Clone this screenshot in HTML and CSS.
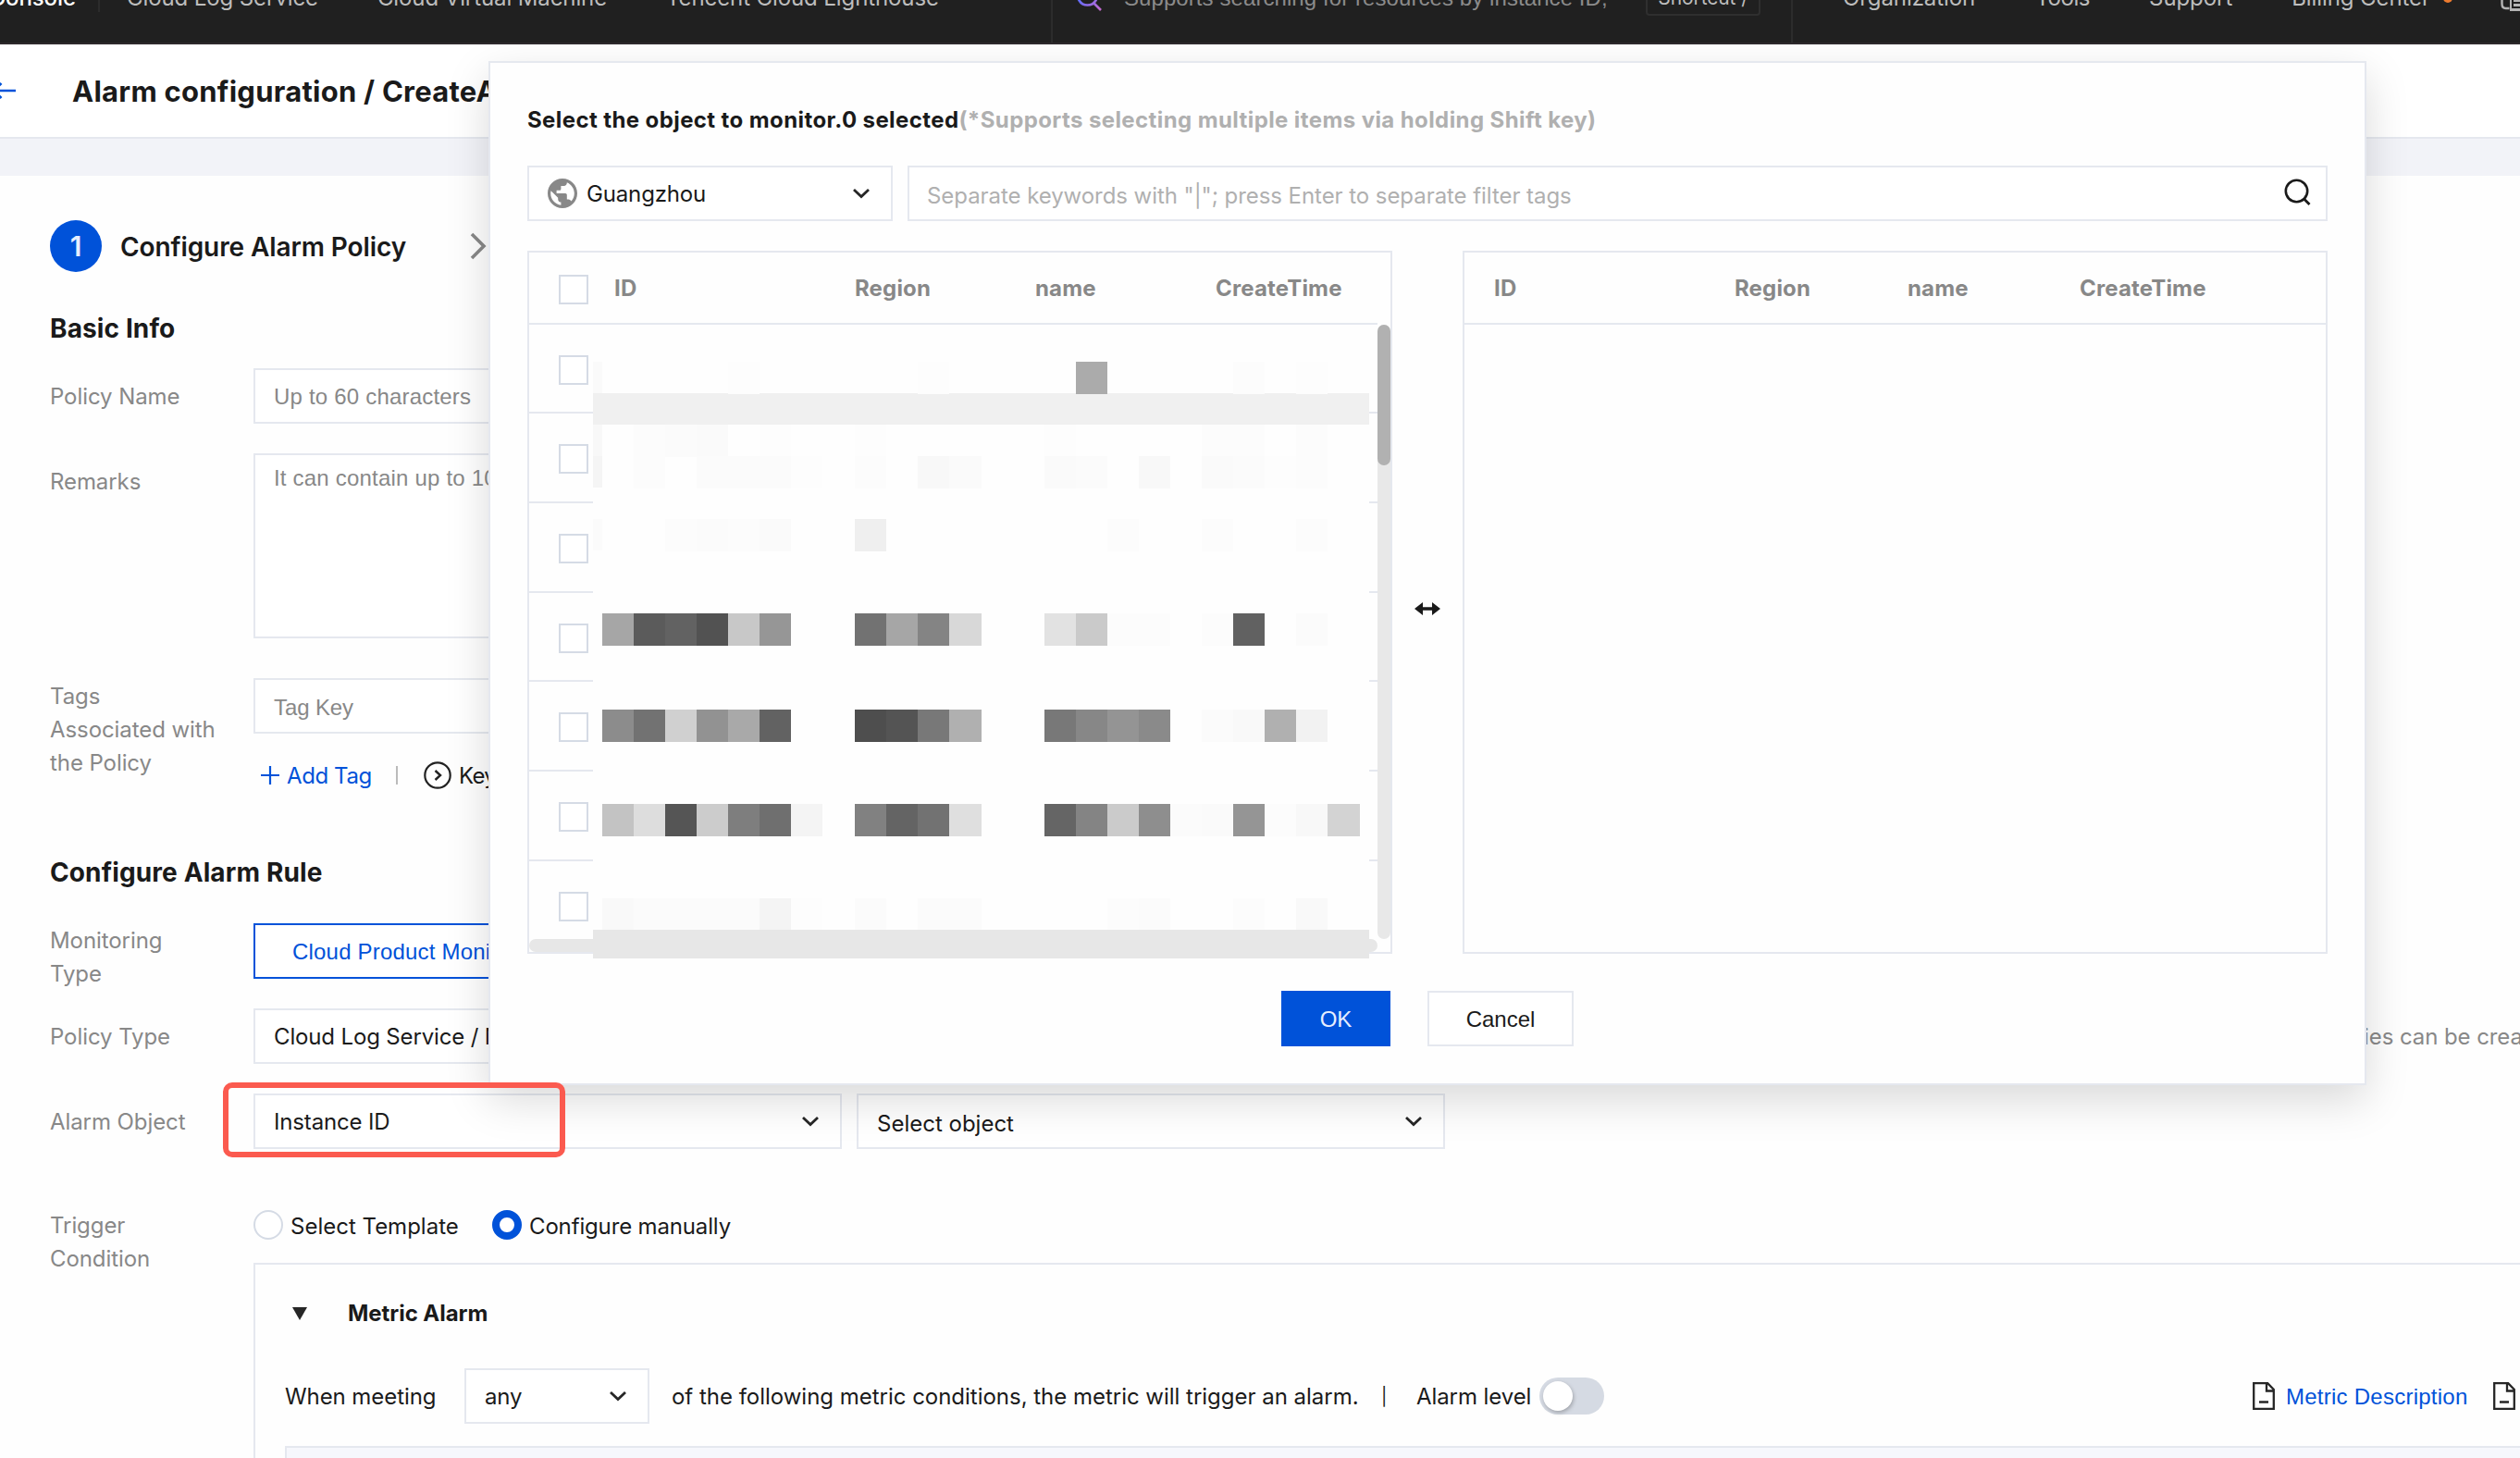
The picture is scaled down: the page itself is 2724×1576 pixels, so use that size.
FILE: index.html
```
<!DOCTYPE html>
<html lang="en">
<head>
<meta charset="utf-8">
<title>Alarm configuration</title>
<link rel="stylesheet" href="styles.css">
</head>
<body>
<header class="topbar">
  <div class="brand">Console</div>
  <nav class="products"><a>Cloud Log Service</a><a>Cloud Virtual Machine</a><a>Tencent Cloud Lighthouse</a></nav>
  <div class="global-search">
    <svg class="gs-icon" width="30" height="30" viewBox="0 0 30 30"><defs><linearGradient id="gs" x1="0" y1="0" x2="1" y2="1"><stop offset="0.2" stop-color="#4f6bff"/><stop offset="1" stop-color="#c86bd0"/></linearGradient></defs><path d="M13.500 2.500a10.500 10.500 0 1 0 .01 0zM21 22l7 7" fill="none" stroke="url(#gs)" stroke-width="2.600"/></svg>
    <span class="gs-text">Supports searching for resources by instance ID,</span>
    <kbd>Shortcut /</kbd>
  </div>
  <nav class="account"><a>Organization</a><a>Tools</a><a>Support</a><a>Billing Center</a><i class="dot"></i>
    <svg class="lang" width="30" height="30" viewBox="0 0 30 30"><path d="M2.500 4v17q0 5 4 5h4" fill="none" stroke="#b4b4b4" stroke-width="2.400"/><rect x="11" y="10" width="20" height="19" fill="#b4b4b4"/><path d="M22 14h-8v11h8M14 20h8" fill="none" stroke="#1f1f1f" stroke-width="2"/></svg>
  </nav>
</header>

<div class="page-title">
  <svg class="back" width="20" height="24" viewBox="0 0 20 24"><path d="M0 12h17M1.500 4l-8 8 8 8" fill="none" stroke="#0052d9" stroke-width="2.600"/></svg>
  <h1>Alarm configuration / CreateAlarm Policy</h1>
</div>
<div class="band"></div>

<main class="form">
  <div class="step">
    <span class="step-no">1</span><span class="step-name">Configure Alarm Policy</span>
    <svg width="20" height="30" viewBox="0 0 20 30"><path d="M3 2l13 13L3 28" fill="none" stroke="#888" stroke-width="3.600"/></svg>
  </div>

  <h2 class="basic">Basic Info</h2>
  <div class="row r-name"><label>Policy Name</label><div class="box long ph">Up to 60 characters</div></div>
  <div class="row r-remarks"><label>Remarks</label><div class="box long area ph">It can contain up to 100 characters</div></div>
  <div class="row r-tags"><label>Tags<br>Associated with<br>the Policy</label>
    <div>
      <div class="box long ph tagkey">Tag Key</div>
      <div class="tag-actions">
        <svg width="20" height="20" viewBox="0 0 20 20"><path d="M10 0v20M0 10h20" stroke="#0052d9" stroke-width="2.200"/></svg>
        <a class="link add">Add Tag</a><i class="sep"></i>
        <svg width="30" height="30" viewBox="0 0 30 30"><circle cx="15" cy="15" r="13.700" fill="none" stroke="#222" stroke-width="2.200"/><path d="M12.500 10l5.500 5-5.500 5" fill="none" stroke="#222" stroke-width="2.400"/></svg>
        <span class="clip">Keyword</span>
      </div>
    </div>
  </div>

  <h2 class="rule">Configure Alarm Rule</h2>
  <div class="row r-mon"><label>Monitoring<br>Type</label><div class="box long mon">Cloud Product Monitoring</div></div>
  <div class="row r-type"><label>Policy Type</label><div class="box long">Cloud Log Service / Metric</div><span class="hint">policies can be created</span></div>
  <div class="row r-object"><label>Alarm Object</label>
    <div class="box sel">Instance ID<svg class="chev" width="20" height="12" viewBox="0 0 20 12"><path d="M2 2l8 7.500L18 2" /></svg></div>
    <div class="box sel sel2"><span>Select object</span><svg class="chev" width="20" height="12" viewBox="0 0 20 12"><path d="M2 2l8 7.500L18 2" /></svg></div>
    <div class="highlight"></div>
  </div>
  <div class="row r-trigger"><label>Trigger<br>Condition</label>
    <div class="trigger">
      <div class="radios"><i class="radio"></i><span class="t1">Select Template</span><i class="radio on"></i><span class="t2">Configure manually</span></div>
      <section class="panel">
        <div class="panel-head"><svg width="16" height="14" viewBox="0 0 16 14"><path d="M0 0h16L8 14z" fill="#262626"/></svg><b>Metric Alarm</b></div>
        <div class="cond">
          <span class="when">When meeting</span>
          <div class="box any">any<svg class="chev" width="20" height="12" viewBox="0 0 20 12"><path d="M2 2l8 7.500L18 2" /></svg></div>
          <span class="of">of the following metric conditions, the metric will trigger an alarm.</span>
          <span class="bar">|</span><span class="lvl">Alarm level</span><i class="switch"></i>
          <div class="docs">
            <svg width="24" height="30" viewBox="0 0 24 30"><path d="M1.200 1.200h15L22.800 8v20.800H1.200zM15 1.500V9.500h7.500M7 21.500h10" fill="none" stroke="#262626" stroke-width="2.300"/></svg>
            <a class="link">Metric Description</a>
            <svg width="24" height="30" viewBox="0 0 24 30"><path d="M1.200 1.200h15L22.800 8v20.800H1.200zM15 1.500V9.500h7.500M7 21.500h10" fill="none" stroke="#262626" stroke-width="2.300"/></svg>
          </div>
        </div>
        <div class="rules"></div>
      </section>
    </div>
  </div>
</main>

<div class="dialog">
  <div class="dlg-title">Select the object to monitor.0 selected<span>(*Supports selecting multiple items via holding Shift key)</span></div>
  <div class="filters">
    <div class="box region">
      <svg width="32" height="32" viewBox="2 2 20 20"><path fill="#888" d="M12 2C6.480 2 2 6.480 2 12s4.480 10 10 10 10-4.480 10-10S17.520 2 12 2zm-1 17.930c-3.950-.49-7-3.850-7-7.930 0-.62.080-1.210.21-1.790L9 15v1c0 1.100.9 2 2 2v1.930zm6.900-2.540c-.26-.81-1-1.390-1.900-1.390h-1v-3c0-.55-.45-1-1-1H8v-2h2c.55 0 1-.45 1-1V7h2c1.100 0 2-.9 2-2v-.41c2.930 1.190 5 4.060 5 7.410 0 2.080-.8 3.970-2.100 5.390z"/></svg>
      <span>Guangzhou</span><svg class="chev" width="20" height="12" viewBox="0 0 20 12"><path d="M2 2l8 7.500L18 2" /></svg>
    </div>
    <div class="box keywords"><span>Separate keywords with "|"; press Enter to separate filter tags</span>
      <svg width="30" height="30" viewBox="0 0 30 30"><circle cx="13.500" cy="13.500" r="11.700" fill="none" stroke="#1a1a1a" stroke-width="2.600"/><path d="M21.500 22l6 6" stroke="#1a1a1a" stroke-width="2.800"/></svg></div>
  </div>
  <div class="transfer">
    <div class="list source">
      <div class="thead"><i class="check"></i><b>ID</b><b>Region</b><b>name</b><b>CreateTime</b></div>
      <div class="tbody">
        <div class="rows"><div class="trow short"><i class="check"></i></div><div class="trow"><i class="check"></i></div><div class="trow"><i class="check"></i></div><div class="trow short"><i class="check"></i></div><div class="trow"><i class="check"></i></div><div class="trow"><i class="check"></i></div><div class="trow last"><i class="check"></i></div><div class="hbar"></div></div>
        <div class="vbar"><i></i></div>
      </div>
      <svg class="mosaic" id="mosaic" width="840" height="660" viewBox="0 0 840 660"></svg>
    </div>
    <div class="swap"><svg width="28" height="14" viewBox="0 0 28 14"><path d="M0 7l9-7v5.300h10V0l9 7-9 7V8.700H9V14z" fill="#1a1a1a"/></svg></div>
    <div class="list target"><div class="thead"><b>ID</b><b>Region</b><b>name</b><b>CreateTime</b></div></div>
  </div>
  <div class="actions"><button class="ok">OK</button><button class="cancel">Cancel</button></div>
</div>
<script src="mosaic.js"></script>
</body>
</html>
```

FILE: mosaic.js
```
// Pixelated cover over the source list: each row is [top, {column: "shades..."}].
const CELL = 34.08;
const FIRST = 9.8;
const rows = [
  [14, { 4: "fd", 10: "fd", 15: "ab", 20: "fc", 22: "fd" }],
  [82, { 1: "fc fb fa", 5: "fd", 8: "fd", 14: "fd", 19: "fc fc", 22: "fc" }],
  [116, { 1: "fc", 3: "fb fb fb fd", 8: "fc", 10: "f8 fa", 14: "fa fb fe f8", 19: "fa fb fd fc" }],
  [184, { 2: "fc fb fc fa", 8: "ef", 16: "fc", 19: "fc", 22: "fc" }],
  [286, { 0: "a6 5b 62 52 c8 96", 8: "72 a6 84 d8", 14: "e2 ca fc fc", 19: "fc 61", 22: "fb" }],
  [390, { 0: "8c 72 d0 92 a9 62", 8: "4e 54 78 b0", 14: "78 87 94 8a", 19: "fb f9 b0 f2" }],
  [492, { 0: "c3 dd 55 cc 7e 6f f4", 8: "81 64 72 df", 14: "65 84 cb 8e fb fa 95 fc f8 d3" }],
  [594, { 0: "f9 fb fb fb fb f4 fd", 8: "fb fe fb fb", 16: "fc fb", 19: "fe fc", 22: "f9" }]
];
const svg = document.getElementById("mosaic");
const add = (x, y, w, h, shade) => {
  const r = document.createElementNS("http://www.w3.org/2000/svg", "rect");
  r.setAttribute("x", x); r.setAttribute("y", y);
  r.setAttribute("width", w); r.setAttribute("height", h);
  r.setAttribute("fill", "#" + shade + shade + shade);
  r.setAttribute("shape-rendering", "crispEdges");
  svg.appendChild(r);
};
// Columns from the eighth on sit one pixel further right.
const left = (col) => Math.round(FIRST + col * CELL + (col > 7 ? 0.8 : 0));
add(0, 0, 839, 660, "fe");
add(0, 14, 9.6, 34, "fa");
add(0, 82, 9.6, 34, "f8");
add(0, 116, 9.6, 34, "f5");
add(0, 184, 9.6, 34, "fb");
add(0, 48, 839, 34, "f0");
rows.forEach(([y, groups]) => Object.entries(groups).forEach(([col, shades]) =>
  shades.split(" ").forEach((s, i) => {
    const c = Number(col) + i;
    add(left(c), y, left(c + 1) - left(c), 34.5, s);
  })));
add(0, 628, 839, 31, "e7");
```

FILE: styles.css
```
* { box-sizing: border-box; }
html { overflow: hidden; }
body { margin: 0; width: 2724px; height: 1576px; overflow: hidden; position: relative; background: #fefefe; color: #1a1a1a; font: 400 24px/36px Inter, "Liberation Sans", sans-serif; letter-spacing: -0.08px; }
svg { display: block; flex: none; }
i { font-style: normal; display: block; flex: none; }
span, a, b, label { white-space: nowrap; }
b { font-weight: 700; }
h1, h2 { margin: 0; font-weight: 700; white-space: nowrap; }

.topbar { height: 48px; background: #202020; border-bottom: 2px solid #2d292c; display: flex; color: #bdbdbd; overflow: hidden; position: relative; z-index: 2; }
.topbar a, .brand, .gs-text { line-height: 36px; margin-top: -20px; height: 36px; }
.brand { width: 108px; height: 33px; border-right: 2px solid #2c2c2c; padding-right: 24px; display: flex; justify-content: flex-end; color: #fff; font-weight: 500; }
.products { display: flex; gap: 64px; padding-left: 29px; width: 1028px; }
.products a { letter-spacing: -0.1px; }
.global-search { width: 802px; flex: none; border: solid #2c2c2c; border-width: 0 2px; display: flex; padding-left: 24px; }
.brand, .products { flex: none; }
.gs-icon { margin-top: -18px; }
.gs-text { margin-left: 23px; width: 564px; color: #8b8b8b; font-family: "Liberation Sans", Arial, sans-serif; letter-spacing: 0.08px; }
kbd { font: 400 21px/32px Inter, sans-serif; height: 37px; margin-top: -20px; width: 124px; border: 2px solid #2f2f2f; border-radius: 4px; text-align: center; }
.account { display: flex; padding-left: 54px; flex: none; }
.account a { margin-right: 64px; }
.account a:nth-child(1) { margin-right: 65px; }
.account a:nth-child(2) { letter-spacing: -0.4px; }
.account a:nth-child(4) { margin-right: 14px; letter-spacing: -0.08px; }
.dot { width: 10px; height: 10px; border-radius: 5px; background: #ed7b2f; margin-top: -7px; }
.lang { margin: -17px -30px 0 51px; }

.page-title { height: 102px; background: #fff; border-bottom: 2px solid #e5e8ef; display: flex; align-items: center; }
.back { width: 20px; margin-right: 58px; }
h1 { font-size: 31px; letter-spacing: 0.25px; padding-top: 1px; }
.band { height: 40px; background: #f2f3f8; }

.form { padding: 48px 0 0 54px; }
.step { display: flex; align-items: center; height: 56px; }
.step-no { width: 56px; height: 56px; border-radius: 28px; background: #0052d9; color: #e6eeff; font-size: 30px; font-weight: 600; line-height: 57px; text-align: center; margin-right: 20px; }
.step-name { font-size: 28px; font-weight: 600; width: 377px; letter-spacing: -0.1px; padding-top: 2px; }
h2 { font-size: 28px; line-height: 40px; letter-spacing: 0.12px; }
.basic { margin-top: 41px; }
.rule { margin-top: 67px; }
.row { display: flex; position: relative; }
label { width: 220px; flex: none; color: #888; padding-top: 13px; }
.box { border: 2px solid #e5e8ef; background: #fff; height: 60px; padding: 2px 20px 0; display: flex; align-items: center; white-space: nowrap; flex: none; overflow: hidden; letter-spacing: -0.15px; }
.long { width: 635px; }
.ph { color: #888; font-family: "Liberation Sans", Arial, sans-serif; letter-spacing: 0.2px; }
.tagkey { letter-spacing: -0.1px; padding-top: 3px; }
.chev { margin-left: auto; }
.chev path { fill: none; stroke: #262626; stroke-width: 2.8px; }
.r-name { margin-top: 23px; }
.r-remarks { margin-top: 32px; }
.area { height: 200px; align-items: flex-start; padding-top: 7px; }
.r-tags { margin-top: 43px; height: 123px; }
.r-tags label { padding-top: 2px; }
.tag-actions { display: flex; align-items: center; height: 36px; margin-top: 27px; padding-left: 8px; }
.link { color: #0052d9; font-family: "Liberation Sans", Arial, sans-serif; letter-spacing: 0.25px; padding-top: 1px; }
.add { font-family: Inter, sans-serif; letter-spacing: -0.4px; width: 118px; margin-left: 8px; }
.sep { width: 2px; height: 20px; background: #bbb; margin-right: 28px; }
.clip { margin-left: 8px; letter-spacing: -0.7px; padding-top: 1px; }
.r-mon { margin-top: 35px; }
.r-mon label { padding-top: 1px; margin-bottom: -1px; }
.mon { border-color: #0052d9; color: #0052d9; padding-left: 40px; font-family: "Liberation Sans", Arial, sans-serif; letter-spacing: 0.2px; }
.r-type { margin-top: 20px; }
.r-object { margin-top: 32px; }
.r-type label, .r-object label { padding-top: 13px; }
.hint { margin-left: 1592px; margin-right: -400px; color: #888; padding-top: 13px; }
.sel { width: 636px; padding-right: 22px; }
.sel .chev { margin-top: -3px; }
.sel2 { margin-left: 16px; letter-spacing: 0; }
.sel2 span { padding-top: 4px; }
.highlight { position: absolute; left: 187px; top: -12px; width: 370px; height: 81px; border: 6px solid #fb5a4f; border-radius: 10px; z-index: 3; }
.r-trigger { margin-top: 65px; }
.r-trigger label { padding-top: 0; }
.radios { display: flex; align-items: center; height: 36px; }
.radios span { padding-top: 1px; }
.radio { width: 32px; height: 32px; border-radius: 16px; border: 2px solid #d5dbe5; background: #fff; margin-right: 8px; margin-top: -2px; }
.radio.on { border: 8px solid #0052d9; }
.t1 { width: 218px; letter-spacing: 0; }
.t2 { letter-spacing: -0.15px; }
.panel { margin-top: 22px; width: 2450px; height: 211px; border: solid #e5e8ef; border-width: 2px 0 0 2px; padding: 35px 0 0 32px; overflow: hidden; }
.panel-head { display: flex; align-items: center; padding-left: 8px; gap: 44px; letter-spacing: -0.05px; }
.panel-head svg { margin-top: -1px; }
.cond { display: flex; align-items: center; height: 60px; margin-top: 41px; }
.cond span { padding-top: 1px; flex: none; }
.when { width: 194px; letter-spacing: -0.08px; }
.any { width: 200px; padding-right: 22px; }
.any .chev { margin-top: -3px; }
.of { margin-left: 24px; width: 767px; letter-spacing: -0.02px; }
.cond .bar { width: 38px; font-size: 19px; }
.lvl { width: 133px; }
.switch { width: 70px; height: 40px; border-radius: 20px; background: #d5dae3; position: relative; }
.switch::after { content: ""; position: absolute; left: 4px; top: 4px; width: 32px; height: 32px; border-radius: 16px; background: #fff; box-shadow: 1px 2px 4px rgba(0, 0, 0, 0.25); }
.docs { display: flex; align-items: center; margin-left: 701px; }
.docs .link { margin-left: 12px; width: 224px; flex: none; }
.rules { margin-top: 24px; height: 14px; border: solid #e5e8ef; border-width: 2px 0 0 2px; background: #f6f7fc; }

.dialog { position: absolute; left: 528px; top: 66px; width: 2030px; height: 1107px; background: #fefefe; border: 2px solid #e5e8ef; box-shadow: 0 16px 44px rgba(0, 0, 0, 0.15); padding: 44px 40px 0; }
.dlg-title { font-weight: 700; letter-spacing: 0.4px; height: 36px; white-space: nowrap; }
.dlg-title span { color: #b0b0b0; }
.filters { display: flex; gap: 16px; margin-top: 31px; }
.region { width: 395px; padding: 0 22px 0 20px; gap: 10px; }
.region span { padding-top: 2px; }
.region .chev { margin-top: -1px; }
.keywords { width: 1535px; padding: 0 15px 0 19px; justify-content: space-between; color: #b0b0b0; letter-spacing: -0.06px; }
.keywords span { padding-top: 5px; }
.keywords svg { margin-top: -2px; }
.transfer { display: flex; margin-top: 32px; }
.list { border: 2px solid #e5e8ef; height: 760px; position: relative; }
.source { width: 935px; }
.target { width: 935px; }
.thead { height: 78px; border-bottom: 2px solid #e5e8ef; display: grid; align-items: center; color: #888; letter-spacing: 0.15px; }
.thead b { padding-top: 2px; }
.source .thead { grid-template-columns: 60px 260px 195px 195px 1fr; padding-left: 32px; margin-right: 14px; }
.target .thead { grid-template-columns: 260px 187px 186px 1fr; padding-left: 32px; }
.check { width: 32px; height: 32px; border: 2px solid #d5dbe5; background: #fff; }
.thead .check { margin-top: 4px; }
.tbody { display: flex; height: 678px; }
.rows { width: 917px; display: flex; flex-direction: column; }
.trow { height: 97px; flex: none; border-bottom: 2px solid #e5e8ef; padding: 33px 0 0 32px; }
.trow.short { height: 96px; }
.trow.last { height: 84px; border-bottom: 0; }
.hbar { height: 14px; border-radius: 7px; background: #e7e7e7; flex: none; }
.vbar { width: 14px; height: 664px; background: #e8e8e8; border-radius: 7px; }
.vbar i { height: 152px; border-radius: 7px; background: #b1b1b1; }
.mosaic { position: absolute; left: 69px; top: 104px; }
.swap { width: 76px; display: flex; justify-content: center; align-items: center; padding-top: 14px; height: 760px; }
.actions { display: flex; justify-content: center; gap: 40px; margin-top: 40px; }
button { height: 60px; border: 2px solid #e5e8ef; background: #fff; color: #1a1a1a; font: 400 24px/58px "Liberation Sans", Arial, sans-serif; padding: 0; width: 158px; }
.ok { width: 118px; background: #0052d9; border-color: #0052d9; color: #e6eeff; }
```
